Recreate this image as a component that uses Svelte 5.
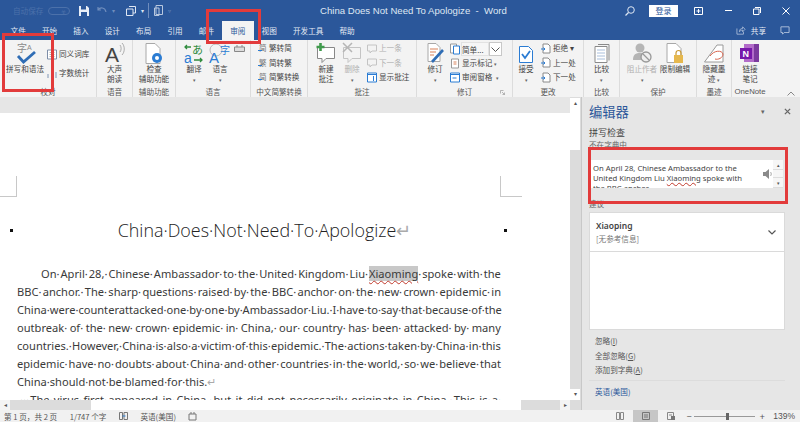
<script>
    // document lines, laid out one by one since the screenshot's wrap is fixed
    const lines = [
        'On April 28, Chinese Ambassador to the United Kingdom Liu Xiaoming spoke with the',
        'BBC anchor. The sharp questions raised by the BBC anchor on the new crown epidemic in',
        'China were counterattacked one by one by Ambassador Liu. I have to say that because of the',
        'outbreak of the new crown epidemic in China, our country has been attacked by many',
        'countries. However, China is also a victim of this epidemic. The actions taken by China in this',
        'epidemic have no doubts about China and other countries in the world, so we believe that'
    ];
    const tabs = ['文件', '开始', '插入', '设计', '布局', '引用', '邮件', '审阅', '视图', '开发工具', '帮助'];
</script>

{#snippet small(label, cls = '')}
    <div class="small {cls}">
        <svg width="10" height="11" viewBox="0 0 10 11"><path d="M2 1h5l2 2v7H2z" fill="#fff" stroke="#8a8a8a"/><path d="M0 6h4M2.500 4.500 4 6 2.500 7.500" fill="none" stroke="#2b7cd3"/></svg>
        <span>{label}</span>
    </div>
{/snippet}

<main>
    <header class="titlebar">
        <div class="qat">
            <span class="autosave">自动保存</span>
            <span class="toggle">关</span>
            <svg class="q-save" width="10" height="10" viewBox="0 0 10 10"><path d="M0 0h8l2 2v8H0z" fill="#e8eef7"/><path d="M2 0h5v3.500H2zM2 6h6v4H2z" fill="#2b579a"/></svg>
            <svg class="q-undo" width="10" height="9" viewBox="0 0 10 9"><path d="M1 1v3h3M1 4c2-3 7-3 8 2" fill="none" stroke="#6f8dbd" stroke-width="1.200"/></svg>
            <span class="mini">▾</span>
            <svg class="q-redo" width="10" height="10" viewBox="0 0 10 10"><path d="M3 .5h6.500v6.500H7M.5 3h6.500v6.500H.5z" fill="none" stroke="#dfe7f3"/></svg>
            <span class="mini light">▾</span>
            <i class="qsep"></i>
            <svg class="q-more" width="9" height="11" viewBox="0 0 9 11"><path d="M2 .5h6.500v9H2zM.5 3h4.500v7.500H.5z" fill="none" stroke="#b9c8df"/></svg>
            <span class="mini q-caret">▿</span>
        </div>
        <div class="doc-title">China Does Not Need To Apologize&nbsp; - &nbsp;Word</div>
        <div class="win">
            <svg class="w-search" width="10" height="10" viewBox="0 0 10 10"><circle cx="6" cy="4" r="3.300" fill="none" stroke="#dfe7f3"/><path d="M3.500 6.500 .5 9.500" stroke="#dfe7f3" stroke-width="1.200"/></svg>
            <span class="login">登录</span>
            <svg class="w-box" width="9" height="8" viewBox="0 0 9 8"><path d="M.5.500h8v7h-8z" fill="none" stroke="#fff"/><path d="M4.500 2v4M2.500 4h4" stroke="#fff"/></svg>
            <i class="minimize"></i>
            <svg class="w-max" width="8" height="8" viewBox="0 0 8 8"><path d="M2 .5h5.500v5.500M.5 2h5.500v5.500H.5z" fill="none" stroke="#fff"/></svg>
            <svg class="w-close" width="8" height="8" viewBox="0 0 8 8"><path d="M.5.500l7 7M7.500.5l-7 7" stroke="#fff"/></svg>
        </div>
    </header>

    <nav class="tabs">
        {#each tabs as tab}
            <span class="tab" class:active={tab === '审阅'}>{tab}</span>
        {/each}
        <div class="share">
            <svg width="10" height="9" viewBox="0 0 12 11"><path d="M1 3v7h8V7M4 7c0-3 2-4 4-4V1l3 3-3 3V5C6 5 5 6 4 7z" fill="none" stroke="#cfdaeb" stroke-width=".8"/></svg>
            <span>共享</span>
            <svg class="comment" width="10" height="9" viewBox="0 0 12 11"><path d="M1 1h10v7H5L3 10V8H1z" fill="none" stroke="#cfdaeb" stroke-width=".9"/></svg>
        </div>
    </nav>

    <section class="ribbon">
        <div class="group g-proof">
            <div class="body">
                <div class="big spell">
                    <svg width="28" height="22" viewBox="0 0 28 22">
                        <text x="6" y="10" font-size="10" fill="#8a8a8a" font-family="Noto Sans CJK SC">字</text>
                        <text x="16" y="8" font-size="7" fill="#8a8a8a" font-family="Liberation Sans">A</text>
                        <path d="M7 14l5.500 6L24 10" fill="none" stroke="#2f6db5" stroke-width="2.800"/>
                    </svg>
                    <span>拼写和语法</span>
                </div>
                <div class="stack two">
                    <div class="small"><svg width="10" height="11" viewBox="0 0 10 11"><path d="M.5 1h9v9h-9z" fill="#fff" stroke="#7d8ea8"/><path d="M2.500 3.500h5M2.500 5.500h5M2.500 7.500h5" stroke="#b5b5b5"/></svg><span>同义词库</span></div>
                    <div class="small"><svg width="10" height="11" viewBox="0 0 10 11"><path d="M0 10V6h2v4zM4 10V1h2v9zM8 10V4h2v6z" fill="#b9c4d4"/></svg><span>字数统计</span></div>
                </div>
            </div>
            <label>校对</label>
        </div>

        <div class="group g-voice">
            <div class="body">
                <div class="big">
                    <svg width="20" height="22" viewBox="0 0 20 22">
                        <text x="0" y="20" font-size="21" fill="#444" font-family="Liberation Sans">A</text>
                        <path d="M15 3c1.500 2 1.500 5 0 7M17 1c3 3 3 9 0 12" fill="none" stroke="#999" stroke-width=".8"/>
                    </svg>
                    <span>大声<br>朗读</span>
                </div>
            </div>
            <label>语音</label>
        </div>

        <div class="group g-access">
            <div class="body">
                <div class="big">
                    <svg width="18" height="22" viewBox="0 0 18 22">
                        <path d="M1 1.500h9l5 5v15H1z" fill="#fff" stroke="#a8a8a8"/>
                        <circle cx="12" cy="16" r="5" fill="#2b7cd3"/>
                        <circle cx="12" cy="16" r="2" fill="#fff"/>
                    </svg>
                    <span>检查<br>辅助功能</span>
                </div>
            </div>
            <label>辅助功能</label>
        </div>

        <div class="group g-lang">
            <div class="body">
                <div class="big">
                    <svg width="20" height="22" viewBox="0 0 20 22">
                        <text x="0" y="21" font-size="14" fill="#2b7cd3" font-family="Liberation Sans">a</text>
                        <text x="8" y="12" font-size="11" fill="#2e8b3d" font-family="Noto Sans CJK SC">あ</text>
                        <path d="M1 5h6M3 3 1 5l2 2M10 18h8M16 16l2 2-2 2" fill="none" stroke="#2e8b3d" stroke-width="1.300"/>
                    </svg>
                    <span>翻译<br><em>▾</em></span>
                </div>
                <div class="big">
                    <svg width="22" height="22" viewBox="0 0 22 22">
                        <circle cx="7" cy="8" r="6" fill="none" stroke="#aaa" stroke-width=".8"/>
                        <text x="0" y="21" font-size="15" fill="#2b7cd3" font-family="Liberation Sans">A</text>
                        <text x="11" y="12" font-size="10" fill="#2b7cd3" font-family="Noto Sans CJK SC">字</text>
                    </svg>
                    <span>语言<br><em>▾</em></span>
                </div>
                <svg class="lang-extra" width="11" height="7" viewBox="0 0 11 7"><path d="M.5 2h10v4.500H.5z" fill="#ddd" stroke="#888"/><path d="M3 0v2M8 0v2" stroke="#888"/></svg>
            </div>
            <label>语言</label>
        </div>

        <div class="group g-zh">
            <div class="body">
                <div class="stack">
                    <div class="small zh"><b>简</b><span>繁转简</span></div>
                    <div class="small zh"><b>繁</b><span>简转繁</span></div>
                    <div class="small zh"><b>简</b><span>简繁转换</span></div>
                </div>
            </div>
            <label>中文简繁转换</label>
        </div>

        <div class="group g-comment">
            <div class="body">
                <div class="big">
                    <svg width="20" height="22" viewBox="0 0 20 22">
                        <path d="M1.500 5.500h17v11H10l-4 4v-4H1.500z" fill="#fff" stroke="#888"/>
                        <path d="M4.500 1v8M.5 5h8" stroke="#3f9a4c" stroke-width="2.600"/>
                    </svg>
                    <span>新建<br>批注</span>
                </div>
                <div class="big off">
                    <svg width="20" height="22" viewBox="0 0 20 22">
                        <path d="M1.500 5.500h17v11H10l-4 4v-4H1.500z" fill="none" stroke="#c4c4c4"/>
                        <path d="M1 1l9 9M10 1 1 10" stroke="#b5b5b5" stroke-width="1.500"/>
                    </svg>
                    <span>删除<br><em>▾</em></span>
                </div>
                <div class="stack c-nav">
                    <div class="small off"><svg width="10" height="11" viewBox="0 0 10 11"><path d="M.5 2h9v6H5L3 10V8H.5z" fill="none" stroke="#c4c4c4"/></svg><span>上一条</span></div>
                    <div class="small off"><svg width="10" height="11" viewBox="0 0 10 11"><path d="M.5 2h9v6H5L3 10V8H.5z" fill="none" stroke="#c4c4c4"/></svg><span>下一条</span></div>
                    <div class="small"><svg width="10" height="11" viewBox="0 0 10 11"><path d="M.5 1h9v9h-9z" fill="#fff" stroke="#2b7cd3"/><path d="M.5 2.500h9M6.500 4v5" stroke="#2b7cd3"/></svg><span>显示批注</span></div>
                </div>
            </div>
            <label>批注</label>
        </div>

        <div class="group g-track">
            <div class="body">
                <div class="big">
                    <svg width="20" height="22" viewBox="0 0 20 22">
                        <path d="M3 1.500h8l4 4v14H3z" fill="#fff" stroke="#a8a8a8"/>
                        <path d="M5 7h8M5 10h6M5 13h4" stroke="#d9825b"/>
                        <path d="M7 20 18 8" stroke="#2f6db5" stroke-width="2.600"/>
                    </svg>
                    <span>修订<br><em>▾</em></span>
                </div>
                <div class="stack track-list">
                    <div class="small simple">
                        <svg width="10" height="12" viewBox="0 0 10 12"><path d="M.5 1h6v9h-6z" fill="#fff" stroke="#999"/><path d="M3.500 3h6v8h-6z" fill="#fff" stroke="#2b7cd3"/></svg>
                        <span class="combo">简单...</span>
                        <span class="chev"><svg width="9" height="5" viewBox="0 0 9 5"><path d="M.5.500 4.500 4.500 8.500.5" fill="none" stroke="#555"/></svg></span>
                    </div>
                    <div class="small"><svg width="10" height="11" viewBox="0 0 10 11"><path d="M1.500 1h7v9h-7z" fill="#fff" stroke="#999"/><path d="M3.500 4h3M3.500 6h3" stroke="#d9825b"/></svg><span>显示标记 <em>▾</em></span></div>
                    <div class="small"><svg width="10" height="11" viewBox="0 0 10 11"><path d="M.5 1h9v9h-9z" fill="#fff" stroke="#2b7cd3"/><path d="M.5 2.500h9" stroke="#2b7cd3"/><path d="M2.500 6h4" stroke="#2b7cd3"/></svg><span>审阅窗格 &nbsp;<em>▾</em></span></div>
                </div>
            </div>
            <label>修订</label>
            <svg class="launcher" width="5" height="5" viewBox="0 0 5 5"><path d="M.5.500h3M.5.500v3M2 2l2.500 2.500M4.500 2.500v2h-2" fill="none" stroke="#999" stroke-width=".7"/></svg>
        </div>

        <div class="group g-change">
            <div class="body">
                <div class="big">
                    <svg width="16" height="22" viewBox="0 0 16 22"><path d="M1.500 4.500h9l4 4v12h-13z" fill="#fff" stroke="#2b7cd3"/><path d="M4 12l3 4 5-7" fill="none" stroke="#2b7cd3" stroke-width="1.800"/></svg>
                    <span>接受<br><em>▾</em></span>
                </div>
                <div class="stack">
                    {@render small('拒绝 ▾')}
                    {@render small('上一处')}
                    {@render small('下一处')}
                </div>
            </div>
            <label>更改</label>
        </div>

        <div class="group g-compare">
            <div class="body">
                <div class="big">
                    <svg width="16" height="22" viewBox="0 0 16 22"><path d="M4 2.500h11v16" fill="none" stroke="#8a8a8a"/><path d="M1 4.500h12v16H1z" fill="#fff" stroke="#8a8a8a"/><path d="M3 8h8M3 11h8M3 14h8M3 17h8" stroke="#a9bfdc"/></svg>
                    <span>比较<br><em>▾</em></span>
                </div>
            </div>
            <label>比较</label>
        </div>

        <div class="group g-protect">
            <div class="body">
                <div class="big off wide">
                    <svg width="20" height="22" viewBox="0 0 20 22"><circle cx="8" cy="6" r="4.500" fill="#b5b5b5"/><path d="M1 18c0-6 3-7 7-7s7 1 7 7z" fill="#b5b5b5"/><circle cx="14" cy="15" r="5" fill="#eee" stroke="#999" stroke-width="1.300"/><path d="M11 12l6 6" stroke="#999" stroke-width="1.300"/></svg>
                    <span>阻止作者<br><em>▾</em></span>
                </div>
                <div class="big wide">
                    <svg width="18" height="22" viewBox="0 0 18 22"><path d="M1 1.500h9l5 5v14H1z" fill="#fff" stroke="#a8a8a8"/><path d="M8 13h9v8H8z" fill="#e6b84e"/><path d="M10 13v-2a2.500 2.500 0 0 1 5 0v2" fill="none" stroke="#c99a34" stroke-width="1.200"/></svg>
                    <span>限制编辑</span>
                </div>
            </div>
            <label>保护</label>
        </div>

        <div class="group g-ink">
            <div class="body">
                <div class="big">
                    <svg width="20" height="22" viewBox="0 0 20 22"><path d="M.5 20 13 3h6v17z" fill="#fff" stroke="#9a9a9a"/><path d="M6 14c4-6 12-6 13-2 0 4-5 6-8 5" fill="none" stroke="#d9634c"/></svg>
                    <span>隐藏墨<br>迹 <em>▾</em></span>
                </div>
            </div>
            <label>墨迹</label>
        </div>

        <div class="group g-one">
            <div class="body">
                <div class="big">
                    <svg width="20" height="22" viewBox="0 0 20 22"><path d="M4 2h15v18H4z" fill="#b26cc9"/><path d="M14 2h5v18h-5z" fill="#7b3a9e"/><path d="M0 6h12v11H0z" fill="#7719aa"/><text x="2.500" y="15" font-size="9" font-weight="700" fill="#fff" font-family="Liberation Sans">N</text></svg>
                    <span>链接<br>笔记</span>
                </div>
            </div>
            <label class="latin">OneNote</label>
        </div>

        <svg class="collapse" width="8" height="5" viewBox="0 0 8 5"><path d="M.5 4.500 4 1l3.500 3.500" fill="none" stroke="#888"/></svg>
    </section>

    <div class="workspace">
        <div class="doc-col">
            <div class="strip"></div>
            <article class="page">
                <i class="crop crop-l"></i>
                <i class="crop crop-r"></i>
                <div class="title-row">
                    <i class="mark"></i>
                    <h1>China·Does·Not·Need·To·Apologize<span class="ret">↵</span></h1>
                    <i class="mark"></i>
                </div>
                <div class="para">
                    {#each lines as line, i}
                        <div class="line" class:first={i === 0}>
                            {#each line.split(' ') as word, j}
                                {#if word === 'Xiaoming'}
                                    <span><span class="hit">{word}</span>·</span>
                                {:else}
                                    <span>{word}{j < line.split(' ').length - 1 ? '·' : ''}</span>
                                {/if}
                            {/each}
                        </div>
                    {/each}
                    <div class="line last">China·should·not·be·blamed·for·this.<span class="ret">↵</span></div>
                    <div class="line next">
                        {#each '·· The virus first appeared in China, but it did not necessarily originate in China. This is a'.split(' ') as word}
                            <span>{word}·</span>
                        {/each}
                    </div>
                </div>
            </article>
            <div class="hscroll">
                <span class="arrow">◂</span>
                <i class="trough-l"></i>
                <i class="hthumb"></i>
                <i class="trough-r"></i>
                <span class="arrow">▸</span>
            </div>
        </div>

        <div class="vscroll">
            <span class="arrow">▴</span>
            <i class="vthumb"></i>
            <span class="arrow">▾</span>
        </div>

        <aside class="pane">
            <div class="pane-head">
                <h2>编辑器</h2>
                <span class="pane-menu">▾</span>
                <svg width="7" height="7" viewBox="0 0 8 8"><path d="M1 1l6 6M7 1 1 7" stroke="#666" stroke-width="1.500"/></svg>
            </div>
            <h3>拼写检查</h3>
            <p class="caption">不在字典中</p>
            <div class="context">
                <div class="context-text">
                    On April 28, Chinese Ambassador to the United Kingdom Liu <span class="miss">Xiaoming</span> spoke with the BBC anchor.
                </div>
                <svg class="speaker" width="10" height="10" viewBox="0 0 10 10"><path d="M0 3h2.500L6 0v10L2.500 7H0z" fill="#8a8a8a"/><path d="M7.500 3c1 1 1 3 0 4" fill="none" stroke="#aaa"/></svg>
                <div class="context-scroll"><span>▴</span><span></span><span>▾</span></div>
            </div>
            <p class="caption sugg">建议</p>
            <div class="suggest">
                <div class="suggest-item">
                    <div>
                        <b>Xiaoping</b>
                        <div class="noref">[无参考信息]</div>
                    </div>
                    <svg width="8" height="5" viewBox="0 0 8 5"><path d="M.5.500 4 4 7.500.5" fill="none" stroke="#555" stroke-width="1.200"/></svg>
                </div>
            </div>
            <ul class="actions">
                <li>忽略(<u>I</u>)</li>
                <li>全部忽略(<u>G</u>)</li>
                <li>添加到字典(<u>A</u>)</li>
            </ul>
            <div class="pane-lang">英语(美国)</div>
        </aside>
    </div>

    <footer class="status">
        <span>第 1 页，共 2 页</span>
        <span>1/747 个字</span>
        <svg width="9" height="8" viewBox="0 0 9 8"><path d="M.5.500h3v7h-3zM5 .5h3.500v7H5z" fill="none" stroke="#777"/><path d="M3.500 4h3" stroke="#2b7cd3"/></svg>
        <span class="slang">英语(美国)</span>
        <svg width="9" height="9" viewBox="0 0 9 9"><path d="M1 2h7v6H1z" fill="none" stroke="#777"/><path d="M3 0v2M6 0v2" stroke="#777"/></svg>
        <div class="status-right">
            <svg width="8" height="8" viewBox="0 0 8 8"><path d="M.5.500h3v7h-3zM4.500.5h3v7h-3z" fill="none" stroke="#888"/></svg>
            <span class="view-on"><svg width="8" height="8" viewBox="0 0 8 8"><path d="M.5.500h7v7h-7zM2 3h4M2 5h4" fill="none" stroke="#777"/></svg></span>
            <svg width="8" height="8" viewBox="0 0 8 8"><path d="M.5.500h6v7h-6zM2 3h3" fill="none" stroke="#888"/><path d="M4 4h4v4H4z" fill="#777"/></svg>
            <span class="zoom-sign minus">−</span>
            <div class="slider"><i></i></div>
            <span class="zoom-sign plus">+</span>
            <span class="pct">139%</span>
        </div>
    </footer>

    <!-- annotation boxes drawn over the screenshot -->
    <i class="anno a1"></i>
    <i class="anno a2"></i>
    <i class="anno a3"></i>
</main>

<style>
    :global(body) {
        margin: 0;
        overflow: hidden;
    }

    main {
        position: relative;
        display: flex;
        flex-direction: column;
        width: 800px;
        height: 422px;
        overflow: hidden;
        font-family: "Noto Sans CJK SC", "Liberation Sans", sans-serif;
        font-size: 7.600px;
        background: #e6e6e6;
        color: #444;
    }

    em {
        font-style: normal;
        font-size: 5px;
        color: #666;
    }

    /* title bar */
    .titlebar {
        height: 21px;
        flex: none;
        display: flex;
        align-items: center;
        background: #2b579a;
        position: relative;
    }

    .qat {
        display: flex;
        align-items: center;
        padding-left: 13px;
    }

    .autosave {
        width: 30px;
        white-space: nowrap;
        color: #4c71aa;
    }

    .toggle {
        width: 22px;
        height: 8px;
        margin-left: 5px;
        border: 1px solid #4c71aa;
        border-radius: 5px;
        font-size: 5px;
        line-height: 8px;
        text-align: right;
        padding-right: 3px;
        box-sizing: border-box;
        color: #4c71aa;
    }

    .q-save { margin-left: 9px; }
    .q-undo { margin-left: 8px; }
    .q-redo { margin-left: 10px; }
    .q-more { margin-left: 5px; }
    .q-caret { margin-left: 10px; }

    .mini {
        width: 6px;
        font-size: 6px;
        text-align: center;
        color: #6f8dbd;
        margin-left: 3px;
    }

    .mini.light {
        color: #dfe7f3;
    }

    .qsep {
        width: 1px;
        height: 15px;
        margin-left: 3px;
        background: #6f8dbd;
    }

    .doc-title {
        position: absolute;
        left: 320px;
        font-family: "Liberation Sans", sans-serif;
        font-size: 9.600px;
        color: #dfe7f3;
        white-space: nowrap;
    }

    .win {
        margin-left: auto;
        display: flex;
        align-items: center;
        padding-right: 10px;
    }

    .login {
        width: 29px;
        height: 12px;
        margin: 0 16px 0 14px;
        background: #fff;
        color: #2b579a;
        font-size: 8px;
        line-height: 12px;
        text-align: center;
    }

    .minimize {
        width: 7px;
        height: 1px;
        margin: 0 21px 0 22px;
        background: #fff;
    }

    .w-close {
        margin-left: 21px;
    }

    /* tabs */
    .tabs {
        height: 19px;
        flex: none;
        display: flex;
        padding-left: 2.500px;
        background: #2b579a;
        color: #e4eaf4;
    }

    .tab {
        padding: 0 8.100px;
        height: 19px;
        line-height: 19px;
    }

    .tab.active {
        background: #f3f3f3;
        color: #2b579a;
    }

    .share {
        margin-left: auto;
        display: flex;
        align-items: center;
        gap: 5px;
        padding-right: 10px;
    }

    .comment {
        margin-left: 9px;
    }

    /* ribbon */
    .ribbon {
        height: 57px;
        flex: none;
        display: flex;
        background: #f3f3f3;
        position: relative;
    }

    .group {
        position: relative;
        display: flex;
        flex-direction: column;
        border-right: 1px solid #dcdcdc;
        box-sizing: border-box;
        flex: none;
    }

    .group label {
        height: 10px;
        line-height: 10px;
        text-align: center;
        white-space: nowrap;
        color: #555;
    }

    .group label.latin {
        font-family: "Liberation Sans", sans-serif;
        font-size: 7.800px;
    }

    .body {
        flex: 1;
        display: flex;
        min-height: 0;
        padding-top: 2px;
        position: relative;
    }

    .big {
        flex: none;
        width: 20px;
        display: flex;
        flex-direction: column;
        align-items: center;
        line-height: 10px;
        text-align: center;
        white-space: nowrap;
    }

    .big svg {
        height: 22px;
        overflow: visible;
    }

    .stack {
        display: flex;
        flex-direction: column;
        gap: 2.500px;
    }

    .stack.two {
        padding-top: 6px;
        gap: 7px;
    }

    .small {
        display: flex;
        align-items: center;
        gap: 2px;
        height: 12px;
        line-height: 12px;
        white-space: nowrap;
    }

    .off,
    .off span {
        color: #b0b0b0;
    }

    .zh b {
        position: relative;
        width: 8px;
        font-weight: 400;
        color: #777;
    }

    .zh b::after {
        content: '';
        position: absolute;
        left: -1px;
        bottom: 3px;
        width: 4px;
        height: 1px;
        background: #2b7cd3;
    }

    .g-proof { width: 97px; }
    .g-voice { width: 36px; }
    .g-access { width: 43px; }
    .g-lang { width: 75px; }
    .g-zh { width: 57px; }
    .g-comment { width: 109px; }
    .g-track { width: 96px; }
    .g-change { width: 71px; }
    .g-compare { width: 36px; }
    .g-protect { width: 77px; }
    .g-ink { width: 35px; }
    .g-one { width: 36px; border-right: 0; }

    .g-voice .big,
    .g-access .big,
    .g-compare .big,
    .g-ink .big,
    .g-one .big {
        width: 100%;
    }

    .g-proof .body { padding-left: 5px; gap: 2px; }
    .g-proof .spell { width: 40px; }
    .g-lang .body { padding-left: 8px; gap: 6px; }
    .g-zh .body { padding-left: 8px; }
    .g-comment .body { padding-left: 8px; gap: 6px; }
    .g-comment .c-nav { margin-left: -1px; }
    .g-track .body { padding-left: 8px; gap: 5px; }
    .g-change .body { padding-left: 4px; gap: 6px; }
    .g-change .big { width: 18px; }
    .g-protect .body { padding-left: 6px; gap: 1px; }
    .g-protect .big { width: 32px; }

    .lang-extra {
        position: absolute;
        left: 58px;
        top: 5px;
    }

    .track-list {
        gap: 1.500px;
    }

    .simple {
        height: 14px;
        gap: 1px;
    }

    .combo {
        width: 28px;
        height: 14px;
        line-height: 14px;
        box-sizing: border-box;
        border: 1px solid #e2e2e2;
        background: #f6f6f6;
    }

    .chev {
        width: 13px;
        height: 14px;
        margin-left: -1px;
        box-sizing: border-box;
        border: 1px solid #c8c8c8;
        background: #fff;
        display: flex;
        align-items: center;
        justify-content: center;
    }

    .launcher {
        position: absolute;
        right: 7px;
        bottom: 2px;
    }

    .collapse {
        position: absolute;
        right: 5px;
        bottom: 1px;
    }

    /* document */
    .workspace {
        flex: 1;
        display: flex;
        min-height: 0;
    }

    .doc-col {
        width: 570px;
        flex: none;
        display: flex;
        flex-direction: column;
        background: #fff;
    }

    .strip {
        height: 16px;
        flex: none;
        background: #e6e6e6;
    }

    .page {
        flex: 1;
        min-height: 0;
        overflow: hidden;
        position: relative;
        font-family: "Noto Sans", "Liberation Sans", sans-serif;
        color: #3a3a3a;
    }

    .crop {
        position: absolute;
        top: 63px;
        height: 20px;
        border-bottom: 1px solid #c8c8c8;
    }

    .crop-l {
        left: 0;
        width: 16px;
        border-right: 1px solid #c8c8c8;
    }

    .crop-r {
        left: 500px;
        width: 21px;
        border-left: 1px solid #c8c8c8;
    }

    .title-row {
        display: flex;
        align-items: center;
        justify-content: space-between;
        margin: 102px 63px 0 10px;
        height: 30px;
    }

    .mark {
        width: 3px;
        height: 3px;
        background: #111;
    }

    h1 {
        margin: 0 0 0 12px;
        font-family: "Open Sans", "Noto Sans", sans-serif;
        font-size: 17.900px;
        font-weight: 300;
        color: #222;
        white-space: nowrap;
    }

    .ret {
        color: #aaa;
        font-weight: 400;
    }

    .para {
        margin: 20px 69px 0 17px;
        font-size: 11.100px;
        line-height: 18px;
    }

    .line {
        display: flex;
        justify-content: space-between;
        height: 18px;
        white-space: nowrap;
    }

    .line.first {
        padding-left: 24px;
    }

    .line.last {
        justify-content: flex-start;
    }

    .line.next {
        padding-left: 3px;
    }

    .hit {
        background: #c8c8c8;
        text-decoration: underline wavy #c0392b 1px;
        text-underline-offset: 2px;
    }

    .hscroll {
        height: 10px;
        flex: none;
        display: flex;
        background: #e6e6e6;
    }

    .trough-l {
        width: 81px;
        background: #dcdcdc;
    }

    .hthumb {
        width: 430px;
        background: #fff;
    }

    .trough-r {
        flex: 1;
        background: #dcdcdc;
    }

    .arrow {
        width: 10px;
        flex: none;
        font-size: 6px;
        line-height: 10px;
        text-align: center;
        color: #555;
        background: #f4f4f4;
    }

    .vscroll {
        width: 11px;
        flex: none;
        box-sizing: border-box;
        padding: 1px 1px 10px 0;
        display: flex;
        flex-direction: column;
        background: #dcdcdc;
    }

    .vscroll .arrow {
        height: 11px;
        background: #fff;
    }

    .vthumb {
        height: 41px;
        background: #fff;
        margin-bottom: auto;
    }

    /* editor pane */
    .pane {
        flex: 1;
        min-width: 0;
        border-left: 1px solid #c8c8c8;
        padding-left: 7px;
        background: #e6e6e6;
        position: relative;
    }

    .pane-head {
        display: flex;
        align-items: center;
        height: 28.500px;
        padding-right: 9px;
    }

    h2 {
        margin: 0 auto 0 0;
        font-size: 13.300px;
        font-weight: 400;
        color: #2b579a;
    }

    .pane-menu {
        font-size: 7px;
        color: #666;
        margin-right: 19px;
    }

    h3 {
        margin: 0;
        font-size: 9px;
        line-height: 13px;
        font-weight: 400;
        color: #444;
    }

    .caption {
        margin: 0;
        line-height: 11px;
        color: #666;
    }

    .context {
        position: relative;
        width: 193px;
        height: 28px;
        margin: 10.500px 0 0 1px;
        background: #fff;
        overflow: hidden;
    }

    .context-text {
        width: 155px;
        padding: 2.500px 0 0 3px;
        font-family: "Noto Sans", "Liberation Sans", sans-serif;
        font-size: 7.700px;
        line-height: 10px;
        color: #444;
    }

    .miss {
        text-decoration: underline wavy #c0392b .7px;
    }

    .speaker {
        position: absolute;
        right: 10px;
        top: 9px;
    }

    .context-scroll {
        position: absolute;
        top: 0;
        right: 0;
        width: 10px;
        height: 28px;
        display: flex;
        flex-direction: column;
    }

    .context-scroll span {
        flex: 1;
        font-size: 5px;
        line-height: 9px;
        text-align: center;
        color: #555;
        background: #f6f6f6;
        border-bottom: 1px solid #ddd;
    }

    .sugg {
        margin-top: 9.500px;
    }

    .suggest {
        width: 196px;
        height: 118px;
        margin-top: 3.500px;
        background: #fff;
        border: 1px solid #dadada;
        box-sizing: border-box;
    }

    .suggest-item {
        display: flex;
        align-items: center;
        justify-content: space-between;
        height: 38px;
        padding: 0 8px 0 6px;
        border-bottom: 1px solid #dadada;
    }

    .suggest-item b {
        font-family: "Noto Sans", "Liberation Sans", sans-serif;
        font-size: 8.500px;
        font-weight: 600;
        display: block;
        line-height: 13px;
    }

    .noref {
        line-height: 13px;
        color: #777;
    }

    .actions {
        list-style: none;
        margin: 4px 0 0;
        padding: 0 0 0 6px;
        line-height: 14.500px;
        color: #555;
    }

    .pane-lang {
        width: 190px;
        margin-top: 2.500px;
        padding: 3.500px 0 0 6px;
        border-top: 1px solid #dcdcdc;
        line-height: 14px;
        color: #2b579a;
    }

    /* status bar */
    .status {
        height: 12px;
        flex: none;
        display: flex;
        align-items: center;
        gap: 12.500px;
        padding-left: 4px;
        background: #f1f1f1;
        color: #555;
    }

    .status-right {
        margin-left: auto;
        display: flex;
        align-items: center;
        padding-right: 5px;
    }

    .view-on {
        width: 25px;
        height: 12px;
        margin: 0 9px;
        background: #c6c6c6;
        display: flex;
        align-items: center;
        justify-content: center;
    }

    .slider {
        position: relative;
        width: 61px;
        height: 1px;
        background: #999;
    }

    .slider i {
        position: absolute;
        left: 32px;
        top: -3px;
        width: 3px;
        height: 7px;
        background: #666;
    }

    .zoom-sign {
        width: 6px;
        font-size: 9px;
        text-align: center;
    }

    .minus {
        margin: 0 2px 0 11px;
    }

    .plus {
        margin: 0 8px 0 4px;
    }

    .pct {
        font-family: "Liberation Sans", sans-serif;
        font-size: 8.500px;
    }

    /* red annotation boxes */
    .anno {
        position: absolute;
        border: 3px solid #e23b3b;
        box-sizing: border-box;
    }

    .a1 {
        left: 2px;
        top: 33px;
        width: 52px;
        height: 59px;
    }

    .a2 {
        left: 206px;
        top: 9px;
        width: 55px;
        height: 35px;
    }

    .a3 {
        left: 588px;
        top: 147px;
        width: 200px;
        height: 57px;
    }
</style>
